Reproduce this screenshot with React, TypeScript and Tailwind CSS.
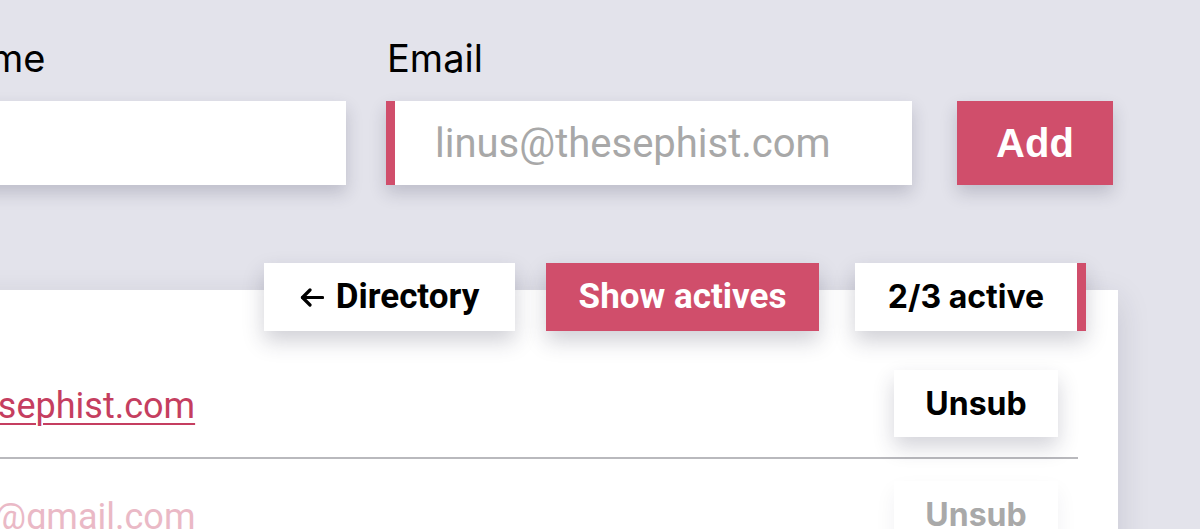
import React from 'react'

const subscribers = [
  { email: 'linus@thesephist.com', active: true },
  { email: 'annabelle@gmail.com', active: false },
]

function BackArrow() {
  return (
    <svg width="24" height="19" viewBox="0 0 24 19" fill="none" stroke="currentColor" strokeWidth="3.2" strokeLinecap="round" strokeLinejoin="round">
      <path d="M22.5 9.5H2.5" />
      <path d="M10 2L2.5 9.5L10 17" />
    </svg>
  )
}

export default function App() {
  return (
    <div className="min-h-screen overflow-hidden bg-[#e3e3eb] font-['Inter',sans-serif]">
      {/* add form */}
      <div className="-ml-[52px] flex items-end pt-[35px]">
        <label className="flex flex-col">
          <span className="-ml-[8px] mb-[19px] text-[38px] leading-[47px] text-black">Name</span>
          <input
            className="h-[84px] w-[398px] bg-white shadow-[0_8px_16px_rgba(40,40,70,0.2)] outline-none"
            type="text"
          />
        </label>
        <label className="ml-[40px] flex flex-col">
          <span className="mb-[19px] ml-[1px] text-[38px] leading-[47px] text-black">Email</span>
          <input
            className="h-[84px] w-[526px] border-l-[9px] border-[#d04e6b] bg-white pl-[40px] font-['Roboto',sans-serif] text-[40px] text-black shadow-[0_8px_16px_rgba(40,40,70,0.2)] outline-none placeholder:text-[#a8a8a8]"
            placeholder="linus@thesephist.com"
            type="email"
          />
        </label>
        <button className="ml-[45px] h-[84px] w-[156px] bg-[#d04e6b] font-['Liberation_Sans',sans-serif] text-[40px] font-bold text-white shadow-[0_8px_16px_rgba(40,40,70,0.2)]">
          Add
        </button>
      </div>

      {/* list */}
      <div className="-ml-[200px] mt-[78px] w-[1318px]">
        <div className="relative z-10 flex justify-end gap-[31px] pr-[32px] font-['Roboto',sans-serif] text-[34px] font-bold">
          <button className="flex h-[68px] w-[251px] items-center justify-center gap-[12px] bg-white text-[35px] text-black shadow-[0_10px_20px_rgba(40,40,70,0.22)]">
            <BackArrow />
            Directory
          </button>
          <button className="flex h-[68px] w-[273px] items-center justify-center bg-[#d04e6b] text-[35px] text-white shadow-[0_10px_20px_rgba(40,40,70,0.22)]">
            Show actives
          </button>
          <div className="ml-[5px] flex h-[68px] w-[231px] items-center justify-center border-r-[9px] border-[#d04e6b] bg-white font-['Inter',sans-serif] text-[32px] text-black shadow-[0_10px_20px_rgba(40,40,70,0.22)]">
            2/3 active
          </div>
        </div>
        <div className="-mt-[41px] bg-white pb-[40px] pl-[39px] pr-[40px] pt-[80px] shadow-[0_10px_30px_rgba(40,40,70,0.15)]">
          {subscribers.map((s, i) => (
            <div
              key={s.email}
              className={
                i === 0
                  ? 'flex items-center justify-between border-b-2 border-[#b9b9bd] pb-[20px]'
                  : 'flex items-center justify-between pt-[22px]'
              }
            >
              <a
                href={'mailto:' + s.email}
                className={
                  s.active
                    ? "pt-[4px] font-['Roboto',sans-serif] text-[36px] text-[#c53e60] underline decoration-2 underline-offset-[5px]"
                    : "pt-[4px] font-['Roboto',sans-serif] text-[36px] text-[#eab9c6]"
                }
              >
                {s.email}
              </a>
              <button
                className={
                  s.active
                    ? 'mr-[20px] h-[67px] w-[164px] bg-white text-[32px] font-bold text-black shadow-[0_10px_20px_rgba(40,40,70,0.2)]'
                    : 'mr-[20px] h-[67px] w-[164px] bg-white text-[32px] font-bold text-[#a9a9a9] shadow-[0_10px_20px_rgba(40,40,70,0.06)]'
                }
              >
                Unsub
              </button>
            </div>
          ))}
        </div>
      </div>
    </div>
  )
}
